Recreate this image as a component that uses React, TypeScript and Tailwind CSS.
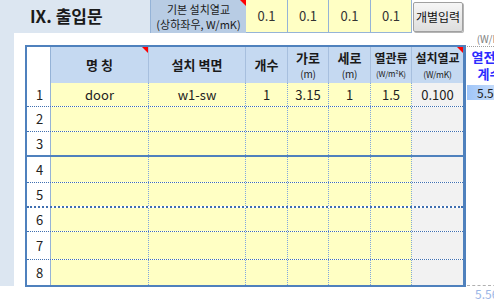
import React from 'react';

const FONT = { fontFamily: '"Noto Sans CJK KR", "Liberation Sans", sans-serif' };

const COLS = [
  { w: 'w-[24px]', key: 'no' },
  { w: 'w-[98px]', key: 'name' },
  { w: 'w-[97px]', key: 'wall' },
  { w: 'w-[42px]', key: 'cnt' },
  { w: 'w-[41px]', key: 'wd' },
  { w: 'w-[42px]', key: 'ht' },
  { w: 'w-[41px]', key: 'u' },
  { w: 'w-[51px]', key: 'psi' },
];

const ROWS = [
  { h: 'h-[24px]', line: 'border-b border-dotted border-[#3f6fb0]', data: ['door', 'w1-sw', '1', '3.15', '1', '1.5', '0.100'] },
  { h: 'h-[25px]', line: 'border-b border-dotted border-[#3f6fb0]' },
  { h: 'h-[25px]', line: 'border-b-2 border-solid border-[#4f81bd]' },
  { h: 'h-[26px]', line: 'border-b border-dotted border-[#3f6fb0]' },
  { h: 'h-[25px]', line: 'border-b-2 border-dotted border-[#3f6fb0]' },
  { h: 'h-[24px]', line: 'border-b border-dotted border-[#3f6fb0]' },
  { h: 'h-[28px]', line: 'border-b border-dotted border-[#3f6fb0]' },
  { h: 'h-[25px]', line: '' },
];

function RedMark() {
  return (
    <span className="absolute top-0 right-0 w-0 h-0 border-t-[6px] border-t-[#ff0000] border-l-[6px] border-l-transparent" />
  );
}

function TwoLine({ w, top, sub, topSize, subSize, last }: { w: string; top: string; sub: string; topSize: string; subSize: string; last?: boolean }) {
  return (
    <div className={`relative ${w} flex flex-col items-center justify-center ${last ? '' : 'border-r border-[#a7bfde]'}`}>
      <span className={`font-bold ${topSize} leading-[15px]`}>{top}</span>
      <span className={`${subSize} leading-[12px] mt-[3px] tracking-tight`}>{sub}</span>
      {last && <RedMark />}
    </div>
  );
}

function HeaderRow() {
  return (
    <div className="flex h-[36px] bg-[#c5d9f1] text-[#1a1a1a]">
      <div className="w-[24px] bg-white border-r border-[#95b3d7]" />
      <div className="relative w-[98px] flex items-center justify-center border-r border-[#a7bfde] font-bold text-[13px]">
        명 칭
        <RedMark />
      </div>
      <div className="w-[97px] flex items-center justify-center border-r border-[#a7bfde] font-bold text-[13px]">설치 벽면</div>
      <div className="w-[42px] flex items-center justify-center border-r border-[#a7bfde] font-bold text-[13px]">개수</div>
      <TwoLine w="w-[41px]" top="가로" sub="(m)" topSize="text-[13px]" subSize="text-[10px]" />
      <TwoLine w="w-[42px]" top="세로" sub="(m)" topSize="text-[13px]" subSize="text-[10px]" />
      <TwoLine w="w-[41px]" top="열관류" sub="(W/m²K)" topSize="text-[12px]" subSize="text-[8px]" />
      <TwoLine w="w-[51px]" top="설치열교" sub="(W/mK)" topSize="text-[12px]" subSize="text-[8.5px]" last />
    </div>
  );
}

function DataRow({ n, h, line, data }: { n: number; h: string; line: string; data?: string[] }) {
  return (
    <div className={`flex ${h} ${line} text-[13px] text-[#222]`}>
      {COLS.map((c, i) => {
        let cls = `${c.w} h-full flex items-center `;
        if (i === 0) cls += 'bg-white border-r border-solid border-[#95b3d7] pl-[9px]';
        else if (i === 7) cls += 'bg-[#f2f2f2] justify-center';
        else cls += 'bg-[#ffffc4] justify-center border-r border-dotted border-[#7fa6e0]';
        return (
          <div key={c.key} className={cls}>
            {i === 0 ? n : data ? data[i - 1] : ''}
          </div>
        );
      })}
    </div>
  );
}

export default function App() {
  return (
    <div className="w-[494px] h-[301px] overflow-hidden bg-white" style={FONT}>
      {/* top bar */}
      <div className="flex h-[33px]">
        <div className="w-[150px] bg-[#dce6f1] flex items-center pl-[30px] pb-[2px] font-bold text-[17px] text-[#1a1a1a]">
          IX. 출입문
        </div>
        <div className="relative w-[96px] bg-[#b8cce4] border-l border-[#95b3d7] flex flex-col items-center justify-center text-[11px] leading-[15px] text-[#1a1a1a]">
          <span>기본 설치열교</span>
          <span>(상하좌우, W/mK)</span>
          <RedMark />
        </div>
        {['a', 'b', 'c', 'd'].map((k, i) => (
          <div
            key={k}
            className={`${i === 1 || i === 3 ? 'w-[41px]' : 'w-[42px]'} bg-[#ffffc4] border-r border-b border-[#95b3d7] flex items-center justify-center text-[13px] text-[#333]`}
          >
            0.1
          </div>
        ))}
        <div className="pt-[2px] pl-[1px]">
          <button className="w-[50px] h-[30px] rounded-[2px] border border-[#a0a0a0] bg-gradient-to-b from-[#f6f6f6] to-[#dedede] shadow-[1px_1px_0_#b5b5b5] text-[12px] text-[#111]">
            개별입력
          </button>
        </div>
      </div>

      {/* body */}
      <div className="flex h-[268px]">
        <div className="w-[14px] h-[253px] bg-[#dce6f1]" />
        <div className="w-[11px]" />
        <div className="pt-[12px]">
          <div className="w-[441px] border-t-2 border-l-2 border-b-2 border-r-[3px] border-[#4f81bd]">
            <HeaderRow />
            {ROWS.map((r, i) => (
              <DataRow key={i} n={i + 1} h={r.h} line={r.line} data={r.data} />
            ))}
          </div>
        </div>
        <div className="w-[28px] overflow-hidden">
          <div className="w-[45px] ml-[1px] h-full flex flex-col">
            <div className="h-[13px] text-[10px] leading-[11px] text-[#808080] text-center">(W/K)</div>
            <div className="h-[37px] border-t border-dotted border-[#a0a0a0] flex flex-col items-center justify-center font-bold text-[13px] leading-[17px] text-[#2b2bff]">
              <span>열전달</span>
              <span>계수</span>
            </div>
            <div className="mt-[2px] h-[15px] bg-gradient-to-r from-[#9fc5f8] to-[#dbe9fc] text-[12px] leading-[15px] text-[#222] pl-[10px]">
              5.56
            </div>
            <div className="mt-auto h-[16px] border-t border-dashed border-[#b0b0b0] text-[12px] leading-[15px] text-[#9bb6e6] pl-[8px]">
              5.56
            </div>
          </div>
        </div>
      </div>
    </div>
  );
}
